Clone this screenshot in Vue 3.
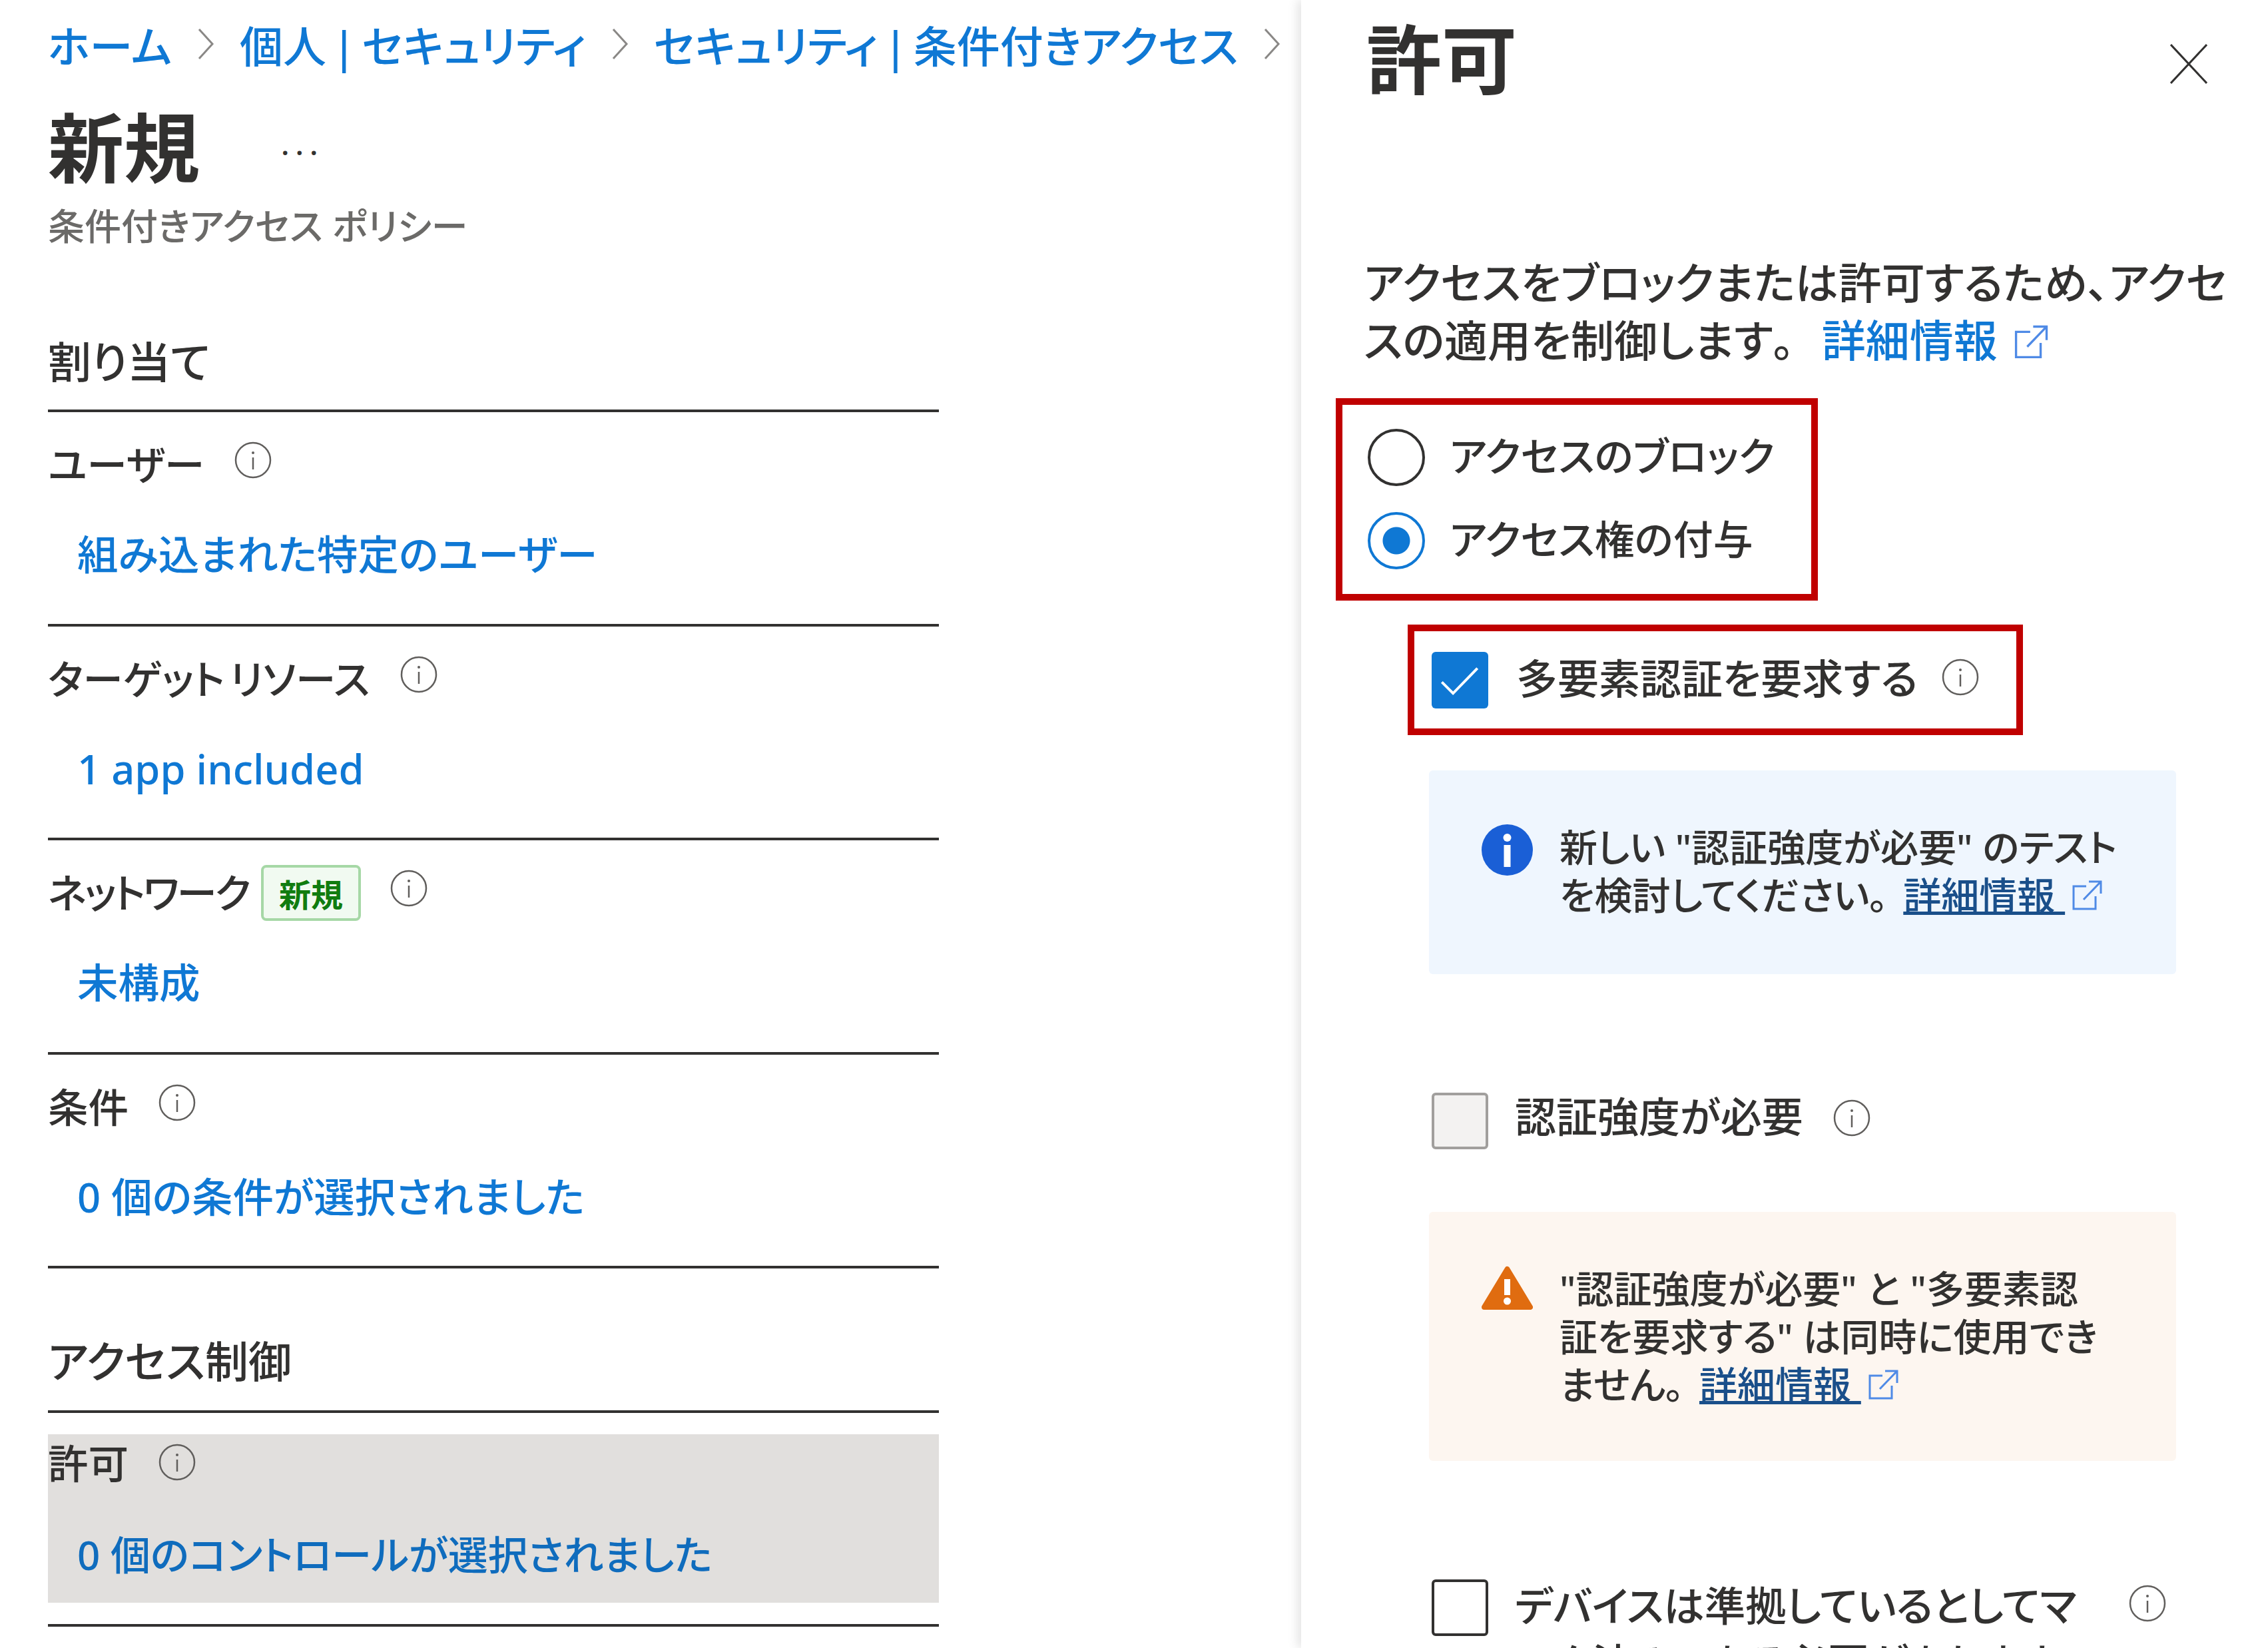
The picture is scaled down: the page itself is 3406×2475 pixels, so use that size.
<template>
  <div class="page" lang="ja">
    <svg class="sprite" width="0" height="0">
      <defs>
        <symbol id="i-info" viewBox="0 0 56 56">
          <circle cx="28" cy="28" r="26" fill="none" stroke="#605e5c" stroke-width="2.5" />
          <circle cx="28" cy="17" r="2" fill="#605e5c" />
          <path d="M28 24v18" stroke="#605e5c" stroke-width="2.5" fill="none" />
        </symbol>
        <symbol id="i-ext" viewBox="0 0 50 50">
          <path d="M24 11H5v34h33V26M20 31 45 5M28 4h18v18" fill="none" stroke="#4f8ae6" stroke-width="3" />
        </symbol>
      </defs>
    </svg>

    <main class="blade">
      <nav class="crumbs">
        <a>ホーム</a>
        <svg class="chevron" viewBox="0 0 26 50"><path d="M3 3l20 22L3 47" /></svg>
        <a>個人 | セキュリティ</a>
        <svg class="chevron" viewBox="0 0 26 50"><path d="M3 3l20 22L3 47" /></svg>
        <a>セキュリティ | 条件付きアクセス</a>
        <svg class="chevron" viewBox="0 0 26 50"><path d="M3 3l20 22L3 47" /></svg>
      </nav>
      <div class="title-row">
        <h1>新規</h1>
        <span class="more">...</span>
      </div>
      <p class="subtitle">条件付きアクセス ポリシー</p>

      <h2 class="section first">割り当て</h2>
      <section v-for="row in rows" :key="row.label" class="row">
        <div class="label">
          <span :class="{ tight: row.badge }">{{ row.label }}</span>
          <span v-if="row.badge" class="badge">{{ row.badge }}</span>
          <svg class="info" :class="{ near: row.badge }"><use href="#i-info" /></svg>
        </div>
        <a class="value">{{ row.value }}</a>
      </section>

      <h2 class="section second">アクセス制御</h2>
      <div class="grant-wrap">
        <section class="grant">
          <div class="label">
            <span class="up">許可</span>
            <svg class="info"><use href="#i-info" /></svg>
          </div>
          <a class="value">0 個のコントロールが選択されました</a>
        </section>
      </div>
    </main>

    <aside class="panel">
      <header class="panel-head">
        <h1>許可</h1>
        <svg class="close" viewBox="0 0 56 60"><path d="M1 1l54 58M55 1 1 59" /></svg>
      </header>
      <p class="desc">
        アクセスをブロックまたは許可するため、アクセ<br />スの適用を制御します<span class="fw">。</span><a class="more-link">詳細情報</a>
        <svg class="ext big"><use href="#i-ext" /></svg>
      </p>

      <div class="red radios">
        <label class="radio-row"><span class="radio"></span><span class="up">アクセスのブロック</span></label>
        <label class="radio-row"><span class="radio on"></span><span class="up">アクセス権の付与</span></label>
      </div>

      <div class="red mfa">
        <span class="check on">
          <svg viewBox="0 0 85 86"><path d="M15 46l17 17 37-38" /></svg>
        </span>
        <span class="up">多要素認証を要求する</span>
        <svg class="info"><use href="#i-info" /></svg>
      </div>

      <div class="notice blue">
        <svg class="notice-icon" viewBox="0 0 77 77">
          <circle cx="38.5" cy="38.5" r="38.5" fill="#1a5fd6" />
          <circle cx="38.5" cy="20" r="6" fill="#fff" />
          <rect x="33.5" y="31" width="10" height="33" fill="#fff" />
        </svg>
        <p>
          新しい "認証強度が必要" のテスト<br />を検討してください<span class="fw">。</span><a>詳細情報&nbsp;</a>
          <svg class="ext"><use href="#i-ext" /></svg>
        </p>
      </div>

      <div class="option gray-row">
        <span class="check disabled"></span>
        <span class="bolder">認証強度が必要</span>
        <svg class="info"><use href="#i-info" /></svg>
      </div>

      <div class="notice warn">
        <svg class="notice-icon" viewBox="0 0 77 68">
          <path d="M38.5 5 73 62H4z" fill="#e06c10" stroke="#e06c10" stroke-width="8" stroke-linejoin="round" />
          <rect x="34" y="20" width="9" height="24" fill="#fff" />
          <circle cx="38.5" cy="53" r="5.5" fill="#fff" />
        </svg>
        <p>
          "認証強度が必要" と "多要素認<br />証を要求する" は同時に使用でき<br />ません<span class="fw">。</span><a>詳細情報&nbsp;</a>
          <svg class="ext"><use href="#i-ext" /></svg>
        </p>
      </div>

      <div class="option device">
        <span class="check"></span>
        <span class="device-text">デバイスは準拠しているとしてマーク済みである必要があります</span>
        <svg class="info"><use href="#i-info" /></svg>
      </div>
    </aside>
  </div>
</template>

<script setup>
const rows = [
  { label: 'ユーザー', value: '組み込まれた特定のユーザー' },
  { label: 'ターゲット リソース', value: '1 app included' },
  { label: 'ネットワーク', badge: '新規', value: '未構成' },
  { label: '条件', value: '0 個の条件が選択されました' },
]
</script>

<style>
html,
body {
  margin: 0;
  background: #fff;
}
</style>

<style scoped>
.page {
  display: flex;
  width: 3406px;
  height: 2475px;
  overflow: hidden;
  background: #fff;
  color: #323130;
  font-family: "Noto Sans", "Noto Sans CJK JP", sans-serif;
  font-size: 60px;
  font-weight: 500;
  font-feature-settings: "palt";
}

.sprite {
  position: absolute;
}

a {
  color: #0f78d4;
}

h1,
h2,
p {
  margin: 0;
  font-weight: 500;
}

.fw {
  font-feature-settings: normal;
}

.up {
  transform: translateY(-5px);
}

.blade {
  flex: none;
  box-sizing: border-box;
  width: 1954px;
  padding-left: 72px;
}

.crumbs {
  display: flex;
  align-items: center;
  height: 131px;
  white-space: nowrap;
  font-size: 65px;
  word-spacing: -8px;
}

.chevron {
  flex: none;
  width: 26px;
  height: 50px;
  margin: 0 38px;
  fill: none;
  stroke: #8a8886;
  stroke-width: 3;
}

.chevron:last-child {
  margin-right: 0;
}

.title-row {
  display: flex;
  align-items: center;
  height: 112px;
  margin-top: 34px;
}

.title-row h1 {
  font-size: 114px;
  line-height: 112px;
  font-weight: 700;
}

.more {
  margin-left: 122px;
  font-size: 46px;
  line-height: 1;
  color: #323130;
  letter-spacing: 9px;
  transform: translateY(-6px);
}

.subtitle {
  margin-top: 32px;
  font-size: 55px;
  line-height: 60px;
  color: #6b6a68;
}

.section {
  width: 1338px;
  line-height: 60px;
  font-size: 65px;
  border-bottom: 4px solid #323130;
}

.section.first {
  margin-top: 144px;
  padding-bottom: 42px;
}

.section.second {
  margin-top: 109px;
  padding-bottom: 44px;
}

.row {
  box-sizing: border-box;
  width: 1338px;
  height: 321.5px;
  padding-top: 46px;
  border-bottom: 4px solid #323130;
}

.label {
  display: flex;
  align-items: center;
  height: 60px;
  font-size: 60.5px;
  word-spacing: -8px;
}

.tight {
  letter-spacing: -3px;
}

.badge {
  box-sizing: border-box;
  display: flex;
  align-items: center;
  justify-content: center;
  width: 150px;
  height: 84px;
  margin: 6px 0 0 18px;
  border: 4px solid #a6d8a6;
  border-radius: 8px;
  background: #f1faf1;
  color: #107c10;
  font-size: 48px;
  font-weight: 700;
}

.info {
  flex: none;
  width: 56px;
  height: 56px;
  margin-left: 45px;
  transform: translateY(-4px);
}

.info.near {
  margin-left: 44px;
}

.value {
  display: block;
  margin-top: 77px;
  padding-left: 44px;
  line-height: 60px;
  font-size: 61.5px;
}

.grant-wrap {
  box-sizing: border-box;
  width: 1338px;
  height: 321px;
  padding-top: 32px;
  border-bottom: 4px solid #323130;
}

.grant {
  height: 253px;
  padding-top: 16px;
  box-sizing: border-box;
  background: #e1dfdd;
}

.grant .value {
  margin-top: 75px;
  font-size: 60px;
  color: #0f6cbd;
}

.panel {
  flex: none;
  box-sizing: border-box;
  width: 1452px;
  height: 2475px;
  overflow: hidden;
  background: #fff;
  box-shadow: -6px 0 14px rgba(0, 0, 0, 0.1);
}

.panel-head {
  display: flex;
  justify-content: space-between;
  padding: 33px 91px 0 98px;
}

.panel-head h1 {
  font-size: 113px;
  line-height: 110px;
  font-weight: 700;
}

.close {
  width: 56px;
  height: 60px;
  margin-top: 33px;
  fill: none;
  stroke: #323130;
  stroke-width: 3;
}

.desc {
  margin: 238px 0 0 94px;
  line-height: 86px;
  font-size: 65px;
  white-space: nowrap;
}

.more-link {
  margin-left: 8px;
  font-size: 66px;
}

.ext {
  width: 50px;
  height: 50px;
  margin-left: 8px;
  vertical-align: -4px;
}

.ext.big {
  width: 56px;
  height: 56px;
  margin-left: 22px;
  vertical-align: -6px;
}

.red {
  box-sizing: border-box;
  border: 10px solid #c00000;
}

.radios {
  width: 724px;
  height: 304px;
  margin: 44px 0 0 52px;
  padding: 36px 0 0 38px;
}

.radio-row {
  display: flex;
  align-items: center;
  gap: 37px;
  height: 86px;
  white-space: nowrap;
}

.radio-row + .radio-row {
  margin-top: 39px;
}

.radio {
  flex: none;
  box-sizing: border-box;
  width: 86px;
  height: 86px;
  border: 4px solid #323130;
  border-radius: 50%;
}

.radio.on {
  border-color: #0f78d4;
  background: radial-gradient(circle, #0f78d4 0 20px, #fff 21px);
}

.mfa {
  display: flex;
  align-items: center;
  width: 924px;
  height: 166px;
  margin: 36px 0 0 160px;
  padding-left: 26px;
  font-size: 62px;
  white-space: nowrap;
}

.mfa .check {
  margin-right: 42px;
}

.mfa .info {
  margin-left: 36px;
}

.check {
  flex: none;
  box-sizing: border-box;
  display: block;
  width: 85px;
  height: 85px;
  border: 4px solid #323130;
  border-radius: 6px;
}

.check.on {
  border: 0;
  background: #0f78d4;
}

.check.on svg {
  display: block;
  width: 100%;
  height: 100%;
  fill: none;
  stroke: #fff;
  stroke-width: 4;
}

.check.disabled {
  background: #f3f2f1;
  border-color: #a19f9d;
}

.notice {
  display: flex;
  align-items: flex-start;
  box-sizing: border-box;
  width: 1122px;
  margin-left: 192px;
  padding: 79px 0 0 79px;
  border-radius: 6px;
  font-size: 57px;
  line-height: 72px;
}

.notice a {
  color: #1a4f8a;
  text-decoration: underline;
}

.notice .fw {
  letter-spacing: -6px;
}

.notice p {
  margin-left: 40px;
  white-space: nowrap;
}

.notice-icon {
  flex: none;
  width: 77px;
  height: 77px;
  margin-top: 2px;
}

.notice.blue {
  height: 306px;
  margin-top: 53px;
  background: #eff6fe;
}

.notice.warn {
  height: 374px;
  margin-top: 92px;
  background: #fdf6f0;
}

.warn .notice-icon {
  height: 68px;
}

.option {
  display: flex;
  margin-left: 196px;
}

.gray-row {
  align-items: center;
  gap: 40px;
  margin-top: 175px;
  font-size: 62px;
  white-space: nowrap;
}

.gray-row .bolder {
  transform: translateY(-9px);
}

.gray-row .info {
  margin-left: 5px;
}

.device {
  align-items: flex-start;
  gap: 40px;
  margin-top: 178px;
}

.device-text {
  width: 875px;
  margin-top: -4px;
  font-size: 61.5px;
  line-height: 86px;
}

.device .info {
  margin: 12px 0 0 7px;
}
</style>
